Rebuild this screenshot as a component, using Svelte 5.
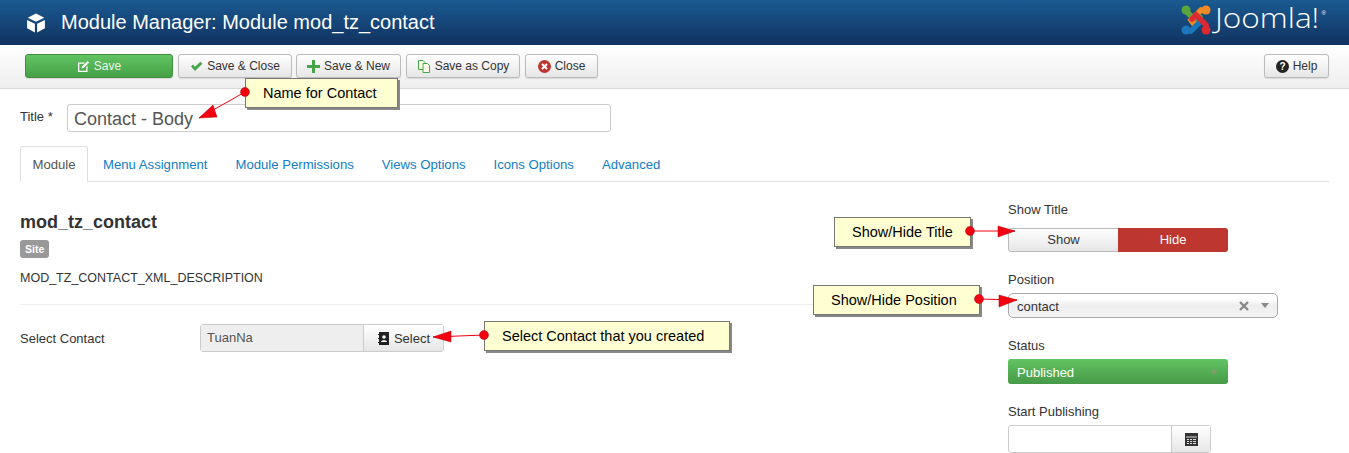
<script>
  const tabs = ['Module', 'Menu Assignment', 'Module Permissions', 'Views Options', 'Icons Options', 'Advanced'];
  // callout notes drawn on top of the page
  const notes = [
    { text: 'Name for Contact', x: 245, y: 78, w: 153, h: 30 },
    { text: 'Show/Hide Title', x: 834, y: 217, w: 137, h: 30 },
    { text: 'Show/Hide Position', x: 813, y: 285, w: 167, h: 30 },
    { text: 'Select Contact that you created', x: 484, y: 321, w: 246, h: 30 }
  ];
  const arrows = [
    { dot: [245, 92], tip: [199, 118], base: [[213, 105], [217, 117]] },
    { dot: [970, 231], tip: [1015, 231], base: [[998, 226], [998, 237]] },
    { dot: [979, 299], tip: [1017, 300], base: [[999, 295], [999, 307]] },
    { dot: [484, 335], tip: [433, 337], base: [[451, 331], [451, 342]] }
  ];
</script>

<div class="page">
  <header class="topbar">
    <svg class="cube" width="20" height="20" viewBox="0 0 18 18">
      <path d="M9 .5 16.500 4.200 9 7.800 1.500 4.200Z" fill="#fff" />
      <path d="M1 6.400 8 9.600V17.500L1 13.800Z" fill="#fff" />
      <path d="M17 6.400 10 9.600V17.500L17 13.800Z" fill="#fff" />
    </svg>
    <h1>Module Manager: Module mod_tz_contact</h1>
    <div class="logo">
      <svg width="30" height="30" viewBox="0 0 30 30" fill="none" stroke-linecap="round" stroke-width="5.500">
        <path d="M5 6 15 16 19 12" stroke="#5ba63c" />
        <circle cx="5" cy="5" r="4.500" fill="#5ba63c" />
        <path d="M25 6 20 5 10 15 13 19" stroke="#f08a24" />
        <circle cx="25" cy="5" r="4.500" fill="#f08a24" />
        <path d="M5 25 10 26 20 16 17 12" stroke="#1b76bc" />
        <circle cx="5" cy="25" r="4.500" fill="#1b76bc" />
        <path d="M25 25 25 20 15 10 11 14" stroke="#dd2a30" />
        <circle cx="25" cy="25" r="4.500" fill="#dd2a30" />
      </svg>
      <span class="wordmark">Joomla!</span>
      <span class="reg">®</span>
    </div>
  </header>

  <nav class="toolbar">
    <button class="btn save">
      <svg width="13" height="13" viewBox="0 0 13 13"><path d="M1 2.500H8L6.800 3.800H2.300V10.700H9.200V7L10.500 5.700V12H1Z" fill="#fff" /><path d="M5 6.500 10.600.9 12.200 2.500 6.600 8.100 4.600 8.600Z" fill="#fff" /></svg>
      Save
    </button>
    <button class="btn w114">
      <svg width="13" height="11" viewBox="0 0 13 11"><path d="M1 5.500 3 3.600 5 5.700 10.400.8 12.400 2.700 5 10Z" fill="#46a546" /></svg>
      Save &amp; Close
    </button>
    <button class="btn w105">
      <svg width="13" height="13" viewBox="0 0 13 13"><path d="M5 0H8V5H13V8H8V13H5V8H0V5H5Z" fill="#46a546" /></svg>
      Save &amp; New
    </button>
    <button class="btn w114">
      <svg width="14" height="13" viewBox="0 0 14 13" fill="#fdfde8" stroke="#46a546"><path d="M1.500.5H6L8 2.500V9.500H1.500Z" /><path d="M6 3.500H10.500L12.500 5.500V12.500H6Z" /></svg>
      Save as Copy
    </button>
    <button class="btn w73">
      <svg width="13" height="13" viewBox="0 0 13 13"><circle cx="6.500" cy="6.500" r="6.500" fill="#bd362f" /><path d="M4 4 9 9M9 4 4 9" stroke="#fff" stroke-width="2" /></svg>
      Close
    </button>
    <button class="btn help">
      <svg width="13" height="13" viewBox="0 0 13 13"><circle cx="6.500" cy="6.500" r="6.500" fill="#222" /><text x="6.500" y="10.200" text-anchor="middle" font-size="10" font-weight="700" fill="#fff" font-family="Liberation Sans">?</text></svg>
      Help
    </button>
  </nav>

  <main class="content">
    <div class="title-row">
      <label for="title">Title *</label>
      <input id="title" value="Contact - Body" />
    </div>

    <ul class="tabs">
      {#each tabs as tab, i}
        <li class:active={i === 0}>{tab}</li>
      {/each}
    </ul>

    <div class="columns">
      <section class="left">
        <h2>mod_tz_contact</h2>
        <span class="badge">Site</span>
        <p>MOD_TZ_CONTACT_XML_DESCRIPTION</p>
        <hr />
        <div class="field">
          <span class="field-label">Select Contact</span>
          <div class="picker">
            <span class="picked">TuanNa</span>
            <span class="pick-btn">
              <svg width="11" height="13" viewBox="0 0 11 13"><path d="M1 0H11V13H1V11H0V10H1V7H0V6H1V3H0V2H1Z" fill="#222" /><circle cx="6" cy="5" r="1.800" fill="#fff" /><path d="M3 10C3 7.500 9 7.500 9 10Z" fill="#fff" /></svg>
              Select
            </span>
          </div>
        </div>
      </section>

      <aside class="right">
        <div class="label first">Show Title</div>
        <div class="toggle">
          <span class="show">Show</span>
          <span class="hide">Hide</span>
        </div>

        <div class="label">Position</div>
        <div class="chosen">
          <span>contact</span>
          <svg class="clear" width="10" height="10" viewBox="0 0 10 10"><path d="M1 1 9 9M9 1 1 9" stroke="#888" stroke-width="2.400" /></svg>
          <i class="caret"></i>
        </div>

        <div class="label">Status</div>
        <div class="status">
          <span>Published</span>
          <i class="caret dim"></i>
        </div>

        <div class="label">Start Publishing</div>
        <div class="date">
          <span class="date-input"></span>
          <span class="date-btn">
            <svg width="13" height="13" viewBox="0 0 13 13"><path d="M0 0H13V13H0Z" fill="#333" /><path d="M1 3.500H12V4.500H1ZM2 6H4V7H2ZM5 6H7V7H5ZM8 6H11V7H8ZM2 8H4V9H2ZM5 8H7V9H5ZM8 8H11V9H8ZM2 10H4V11H2ZM5 10H7V11H5ZM8 10H11V11H8Z" fill="#ddd" /></svg>
          </span>
        </div>
      </aside>
    </div>
  </main>

  <svg class="arrows" width="1349" height="453">
    {#each arrows as a}
      <line x1={a.dot[0]} y1={a.dot[1]} x2={a.tip[0]} y2={a.tip[1]} stroke="#f00010" />
      <polygon points="{a.tip[0]},{a.tip[1]} {a.base[0][0]},{a.base[0][1]} {a.base[1][0]},{a.base[1][1]}" fill="#f50010" stroke="#a00" stroke-width="0.500" />
    {/each}
  </svg>
  {#each notes as n}
    <div class="note" style="left:{n.x}px;top:{n.y}px;width:{n.w}px;height:{n.h}px">{n.text}</div>
  {/each}
  <svg class="arrows" width="1349" height="453">
    {#each arrows as a}
      <circle cx={a.dot[0]} cy={a.dot[1]} r="4.500" fill="#f50010" stroke="#a00" stroke-width="0.500" />
    {/each}
  </svg>
</div>

<style>
  :global(body) {
    margin: 0;
    background: #fff;
  }

  .page {
    position: relative;
    width: 1349px;
    height: 453px;
    overflow: hidden;
    font-family: "Liberation Sans", Arial, sans-serif;
    font-size: 13px;
    color: #333;
  }

  .topbar {
    display: flex;
    align-items: center;
    height: 45px;
    padding: 0 23px 0 26px;
    box-sizing: border-box;
    background: linear-gradient(#1a5a92, #11325f);
    color: #fff;
  }

  .cube {
    margin-right: 15px;
  }

  h1 {
    margin: 0;
    font-size: 20px;
    font-weight: 400;
    flex: 1;
  }

  .logo {
    display: flex;
    align-items: flex-start;
    height: 30px;
    margin-bottom: 6px;
  }

  .wordmark {
    width: 107px;
    margin-left: 4px;
    font-family: "Open Sans", sans-serif;
    font-size: 27px;
    font-weight: 300;
    line-height: 26px;
    white-space: nowrap;
    transform: scaleX(1.17);
    transform-origin: left center;
  }

  .reg {
    font-size: 6px;
    line-height: 8px;
    margin-top: 4px;
  }

  .toolbar {
    display: flex;
    align-items: center;
    gap: 5px;
    height: 44px;
    padding: 0 20px 1px 25px;
    box-sizing: border-box;
    background: linear-gradient(#fff, #eee);
    border-bottom: 1px solid #d8d8d8;
  }

  .btn {
    display: flex;
    align-items: center;
    justify-content: center;
    gap: 4px;
    height: 24px;
    padding: 0;
    box-sizing: border-box;
    font: inherit;
    font-size: 12px;
    color: #333;
    border: 1px solid #bbb;
    border-radius: 3px;
    background: linear-gradient(#fff, #e6e6e6);
    box-shadow: 0 1px 1px rgba(0, 0, 0, 0.1);
  }

  .w114 { width: 114px; }
  .w105 { width: 105px; margin-left: -1px; }
  .w73 { width: 73px; }

  .save {
    width: 148px;
    color: #e9f6e9;
    border-color: #3f8f3f;
    background: linear-gradient(#62c462, #46a046);
  }

  .help {
    width: 65px;
    margin-left: auto;
  }

  .content {
    padding: 15px 20px 0;
  }

  .title-row {
    display: flex;
    align-items: center;
    height: 28px;
  }

  .title-row label {
    width: 47px;
    margin-bottom: 4px;
  }

  .title-row input {
    width: 544px;
    height: 28px;
    box-sizing: border-box;
    padding: 3px 6px 0;
    font: 18px "Liberation Sans", Arial, sans-serif;
    color: #555;
    border: 1px solid #ccc;
    border-radius: 3px;
    outline: none;
  }

  .tabs {
    display: flex;
    margin: 14px 0 0;
    padding: 0;
    list-style: none;
    height: 35px;
    font-size: 13.150px;
    border-bottom: 1px solid #ddd;
  }

  .tabs li {
    display: flex;
    align-items: center;
    padding: 1px 14px 0;
    color: #0f7ec4;
  }

  .tabs li.active {
    justify-content: center;
    width: 66px;
    height: 34px;
    margin-right: 1px;
    padding: 0;
    color: #555;
    background: #fff;
    border: 1px solid #ddd;
    border-bottom-color: #fff;
    border-radius: 3px 3px 0 0;
  }

  .columns {
    display: flex;
    justify-content: space-between;
  }

  .left {
    width: 796px;
    padding-top: 30px;
  }

  h2 {
    margin: 0;
    font-size: 18px;
    line-height: 20px;
    color: #333;
  }

  .badge {
    display: inline-block;
    margin-top: 8px;
    padding: 0 5px;
    height: 18px;
    line-height: 18px;
    font-size: 10.500px;
    font-weight: 700;
    color: #fff;
    background: #999;
    border-radius: 3px;
  }

  .left p {
    margin: 13px 0 0;
    font-size: 12.500px;
    line-height: 14px;
  }

  hr {
    margin: 19px 0 19px;
    border: 0;
    border-top: 1px solid #eee;
  }

  .field {
    display: flex;
    align-items: center;
  }

  .field-label {
    width: 180px;
  }

  .picker {
    display: flex;
    width: 244px;
    height: 28px;
    box-sizing: border-box;
    border: 1px solid #ccc;
    border-radius: 3px;
  }

  .picked {
    flex: 1;
    padding: 0 6px;
    line-height: 26px;
    color: #555;
    background: #eee;
  }

  .pick-btn {
    display: flex;
    align-items: center;
    justify-content: center;
    gap: 5px;
    width: 80px;
    padding-left: 1px;
    box-sizing: border-box;
    border-left: 1px solid #ccc;
    background: linear-gradient(#fff, #e6e6e6);
  }

  .right {
    width: 321px;
    padding-top: 21px;
  }

  .label {
    margin: 21px 0 6px;
    line-height: 14px;
    color: #333;
  }

  .label.first { margin: 0 0 11px; }

  .toggle {
    display: flex;
    width: 220px;
    height: 24px;
    line-height: 24px;
    text-align: center;
    border-radius: 3px;
    overflow: hidden;
  }

  .show {
    flex: 1;
    box-sizing: border-box;
    border: 1px solid #bbb;
    border-right: 0;
    line-height: 22px;
    border-radius: 3px 0 0 3px;
    background: linear-gradient(#fff, #e6e6e6);
  }

  .hide {
    width: 110px;
    color: #fff;
    background: #bd362f;
  }

  .chosen {
    display: flex;
    align-items: center;
    width: 270px;
    height: 25px;
    padding: 0 8px;
    box-sizing: border-box;
    border: 1px solid #aaa;
    border-radius: 5px;
    background: linear-gradient(#fff 20%, #eee 50%, #f4f4f4);
  }

  .chosen span { flex: 1; padding-top: 1px; }
  .clear { margin-right: 12px; }

  .caret {
    width: 0;
    height: 0;
    border: 4px solid transparent;
    border-top: 5px solid #888;
    border-bottom: 0;
  }

  .caret.dim { border-top-color: #7f9f6f; }

  .status {
    display: flex;
    align-items: center;
    justify-content: space-between;
    width: 220px;
    height: 25px;
    padding: 1px 10px 0 9px;
    box-sizing: border-box;
    color: #fff;
    font-size: 13px;
    border-radius: 3px;
    background: linear-gradient(#62c462, #479947);
  }

  .date {
    display: flex;
    width: 203px;
    height: 28px;
    box-sizing: border-box;
    border: 1px solid #ccc;
    border-radius: 3px;
  }

  .date-input { flex: 1; }

  .date-btn {
    display: flex;
    align-items: center;
    justify-content: center;
    width: 38px;
    border-left: 1px solid #ccc;
    background: linear-gradient(#fff, #e6e6e6);
  }

  .arrows {
    position: absolute;
    left: 0;
    top: 0;
    pointer-events: none;
  }

  .note {
    position: absolute;
    display: flex;
    align-items: center;
    padding: 0 0 1px 17px;
    box-sizing: border-box;
    font-size: 14.500px;
    color: #000;
    background: #ffffd2;
    border: 1px solid #777;
    box-shadow: 2px 2px 0 #888;
  }
</style>
